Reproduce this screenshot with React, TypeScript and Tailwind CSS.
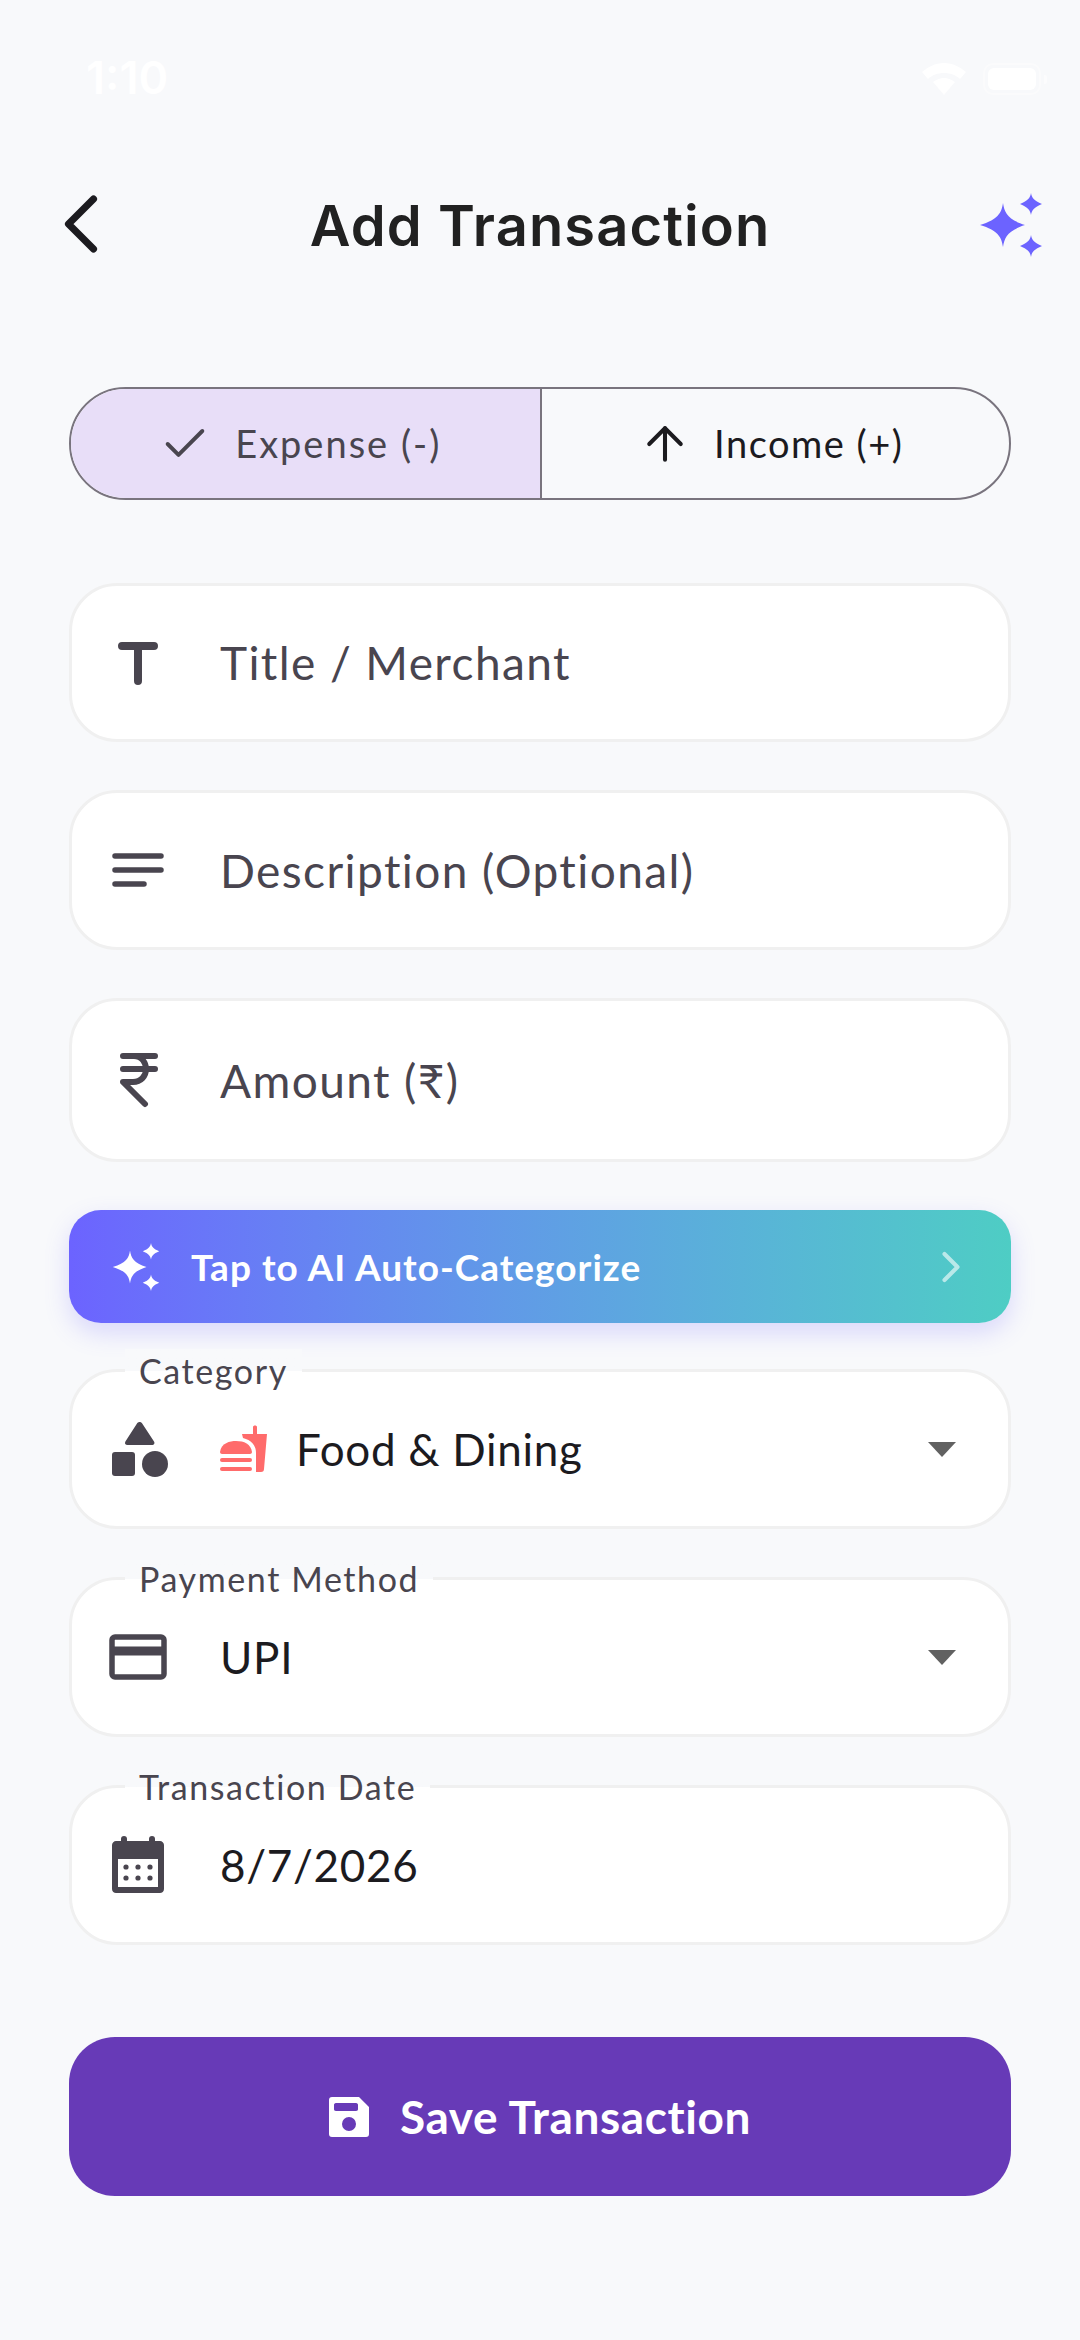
import React from 'react';
import { ArrowUp, Check, ChevronLeft, ChevronRight } from 'lucide-react';

const Sparkles = ({ className }: { className: string }) => (
  <svg viewBox="0 0 62 64" className={className} fill="currentColor">
    <path d="M23 10 C24.5 20 28 26.5 45 32 C28 37.5 24.5 44 23 54 C21.5 44 18 37.5 0 32 C18 26.5 21.5 20 23 10Z" />
    <path d="M51 0 C51.8 5 54 7.5 62 11 C54 14.5 51.8 17 51 22 C50.2 17 48 14.5 40 11 C48 7.5 50.2 5 51 0Z" />
    <path d="M51 42 C51.8 47 54 49.5 62 53 C54 56.5 51.8 59 51 64 C50.2 59 48 56.5 40 53 C48 49.5 50.2 47 51 42Z" />
  </svg>
);

const TitleIcon = () => (
  <svg viewBox="0 0 52 52" className="h-[52px] w-[52px]" fill="none" stroke="#49454F" strokeWidth="8" strokeLinecap="round">
    <path d="M10 9H42M26 9V44" />
  </svg>
);

const NotesIcon = () => (
  <svg viewBox="0 0 52 52" className="h-[52px] w-[52px]" fill="none" stroke="#49454F" strokeWidth="5.5" strokeLinecap="round">
    <path d="M3 12H49M3 26H49M3 40H32" />
  </svg>
);

const RupeeIcon = () => (
  <svg viewBox="0 0 52 56" className="h-[56px] w-[52px]" fill="none" stroke="#49454F" strokeWidth="6" strokeLinecap="round" strokeLinejoin="round">
    <path d="M11 4H43M11 17H43M11 4H22C30 4 34 11 34 17C34 24 29 30 21 30H11L33 52" />
  </svg>
);

const ShapesIcon = () => (
  <svg viewBox="0 0 56 56" className="ml-[3px] h-[56px] w-[56px]" fill="#49454F">
    <path d="M25 2.5C26.3 .5 29 .5 30.2 2.5L42 20.5C43.2 22.6 41.8 24 40 24H15.5C13.4 24 12.3 22.5 13.4 20.5Z" />
    <rect x="0" y="31" width="23" height="24" rx="3" />
    <circle cx="43" cy="43" r="13" />
  </svg>
);

const FoodIcon = () => (
  <svg viewBox="0 0 48 48" className="h-[48px] w-[48px]" fill="#FF6B6B">
    <path d="M0 27C1 18 10 16 16 16C24 16 31 19 32 27C32 28 31 29 30 29H2C1 29 0 28 0 27Z" />
    <rect x="0" y="33" width="32" height="4" rx="2" />
    <rect x="0" y="42" width="32" height="4" rx="2" />
    <path d="M22 9H33V2C33 0 37 0 37 2V9H47L44 44C44 46 43 47 41 47H36V28C36 20 31 15 23 13Z" />
  </svg>
);

const CardIcon = () => (
  <svg viewBox="0 0 58 46" className="h-[46px] w-[58px]" fill="none" stroke="#49454F" strokeWidth="5.5">
    <rect x="3" y="3" width="52" height="40" rx="3" />
    <path d="M3 17H55" strokeWidth="9" />
  </svg>
);

const CalendarIcon = () => (
  <svg viewBox="0 0 52 58" className="h-[58px] w-[52px]" fill="#49454F">
    <rect x="9" y="0" width="6" height="10" rx="3" />
    <rect x="37" y="0" width="6" height="10" rx="3" />
    <path fillRule="evenodd" d="M4 5H48C50 5 52 7 52 9V53C52 55.5 50 57 48 57H4C2 57 0 55.5 0 53V9C0 7 2 5 4 5ZM6 23V51H46V23Z" />
    {[14, 26, 38].map(x => (
      <React.Fragment key={x}>
        <circle cx={x} cy="31" r="2.6" />
        <circle cx={x} cy="42" r="2.6" />
      </React.Fragment>
    ))}
  </svg>
);

const SaveIcon = () => (
  <svg viewBox="0 0 40 40" className="h-[40px] w-[40px]" fill="#fff">
    <path fillRule="evenodd" d="M3 0H30L40 10V37C40 39 39 40 37 40H3C1 40 0 39 0 37V3C0 1 1 0 3 0ZM7 6C5.5 6 5 7 5 8V12C5 13 5.5 14 7 14H27C28.5 14 29 13 29 12V8C29 7 28.5 6 27 6ZM20 20A7 7 0 1 0 20 34A7 7 0 1 0 20 20Z" />
  </svg>
);

function PlainField({ icon, label, height }: { icon: React.ReactNode; label: string; height: string }) {
  return (
    <div className={`flex items-center rounded-[48px] border-[3px] border-[#F0F0F0] bg-white ${height}`}>
      <div className="flex w-[148px] shrink-0 justify-center pr-[16px]">{icon}</div>
      <span className="text-[46px] tracking-[1.4px] text-[#49454F]">{label}</span>
    </div>
  );
}

function LabelledField({ label, icon, children, arrow }: { label: string; icon: React.ReactNode; children: React.ReactNode; arrow?: boolean }) {
  return (
    <div className="relative flex h-[160px] items-center rounded-[48px] border-[3px] border-[#F0F0F0] bg-white">
      <span className="absolute left-[53px] top-[-23px] bg-linear-to-b from-[#F8F9FB] from-50% to-white to-50% px-[14px] text-[34px] leading-[44px] tracking-[1.6px] text-[#49454F]">
        {label}
      </span>
      <div className="flex w-[148px] shrink-0 justify-center pr-[16px]">{icon}</div>
      <div className="flex flex-1 items-center gap-[28px] text-[44px] tracking-[0.7px] text-[#1C1B1F]">{children}</div>
      {arrow && <div className="mr-[52px] h-0 w-0 border-x-[14px] border-t-[15px] border-x-transparent border-t-[#616161]" />}
    </div>
  );
}

export default function App() {
  return (
    <div className="flex min-h-[2340px] flex-col bg-[#F8F9FB] font-['Lato','Noto_Sans',sans-serif]">
      {/* Status bar, white on the pale page */}
      <div className="flex h-[128px] items-start justify-between pl-[86px] pr-[33px] pt-[52px] text-white">
        <span className="font-['Inter',sans-serif] text-[45px] font-semibold leading-[52px]">1:10</span>
        <div className="flex items-center gap-[17px] pt-[11px]">
          <svg viewBox="0 0 44 32" className="h-[32px] w-[44px]" fill="currentColor">
            <path d="M22 0C31 0 38 4 44 9L38 16C34 12 28 10 22 10C16 10 10 12 6 16L0 9C6 4 13 0 22 0ZM22 15C26 15 30 17 33 19L22 32L11 19C14 17 18 15 22 15Z" />
          </svg>
          <div className="flex items-center gap-[3px]">
            <div className="rounded-[10px] border-[2px] border-white/40 p-[3px]">
              <div className="h-[22px] w-[48px] rounded-[6px] bg-white" />
            </div>
            <div className="h-[9px] w-[3px] rounded-r-[2px] bg-white/50" />
          </div>
        </div>
      </div>

      {/* Header */}
      <header className="grid h-[190px] grid-cols-[1fr_auto_1fr] items-start px-[31px] pt-[46px]">
        <ChevronLeft className="h-[100px] w-[100px] text-[#1C1B1F]" strokeWidth={1.7} />
        <h1 className="pt-[18px] font-['Inter',sans-serif] text-[56px] font-semibold leading-[68px] tracking-[1.1px] text-[#212121]">Add Transaction</h1>
        <Sparkles className="mr-[7px] mt-[19px] h-[64px] w-[62px] justify-self-end text-[#6C63FF]" />
      </header>

      <main className="flex flex-col px-[69px]">
        {/* Expense / income */}
        <div className="mt-[69px] flex h-[113px] overflow-hidden rounded-full border-[2.5px] border-[#79747E]">
          <div className="flex flex-1 items-center justify-center gap-[24px] bg-[#E8DEF8] pr-[10px] text-[#49454F]">
            <Check className="h-[52px] w-[52px]" strokeWidth={1.8} />
            <span className="text-[38px] tracking-[2px]">Expense (-)</span>
          </div>
          <div className="w-[2px] bg-[#79747E]" />
          <div className="flex flex-1 items-center justify-center gap-[22px] pr-[9px] text-[#1C1B1F]">
            <ArrowUp className="h-[54px] w-[54px]" strokeWidth={1.8} />
            <span className="text-[38px] tracking-[1.5px]">Income (+)</span>
          </div>
        </div>

        <div className="mt-[83px] flex flex-col gap-[48px]">
          <PlainField icon={<TitleIcon />} label="Title / Merchant" height="h-[159px]" />
          <PlainField icon={<NotesIcon />} label="Description (Optional)" height="h-[160px]" />
          <PlainField icon={<RupeeIcon />} label="Amount (₹)" height="h-[164px]" />
        </div>

        {/* AI button */}
        <div className="mt-[48px] flex h-[113px] items-center rounded-[32px] bg-linear-to-r from-[#6C63FF] to-[#4ECDC4] pl-[43px] pr-[34px] shadow-[0_10px_24px_rgba(108,99,255,0.22)]">
          <Sparkles className="h-[48px] w-[48px] text-white" />
          <span className="ml-[31px] flex-1 text-[37px] font-bold tracking-[1px] text-white">Tap to AI Auto-Categorize</span>
          <ChevronRight className="h-[52px] w-[52px] text-white/60" strokeWidth={1.9} />
        </div>

        <div className="mt-[46px] flex flex-col gap-[48px]">
          <LabelledField label="Category" icon={<ShapesIcon />} arrow>
            <FoodIcon />
            <span>Food &amp; Dining</span>
          </LabelledField>
          <LabelledField label="Payment Method" icon={<CardIcon />} arrow>
            <span>UPI</span>
          </LabelledField>
          <LabelledField label="Transaction Date" icon={<CalendarIcon />}>
            <span>8/7/2026</span>
          </LabelledField>
        </div>

        <button className="mt-[92px] flex h-[159px] items-center justify-center gap-[31px] rounded-[46px] bg-[#673AB7] text-[46px] font-bold tracking-[0.6px] text-white">
          <SaveIcon />
          Save Transaction
        </button>
      </main>
    </div>
  );
}
